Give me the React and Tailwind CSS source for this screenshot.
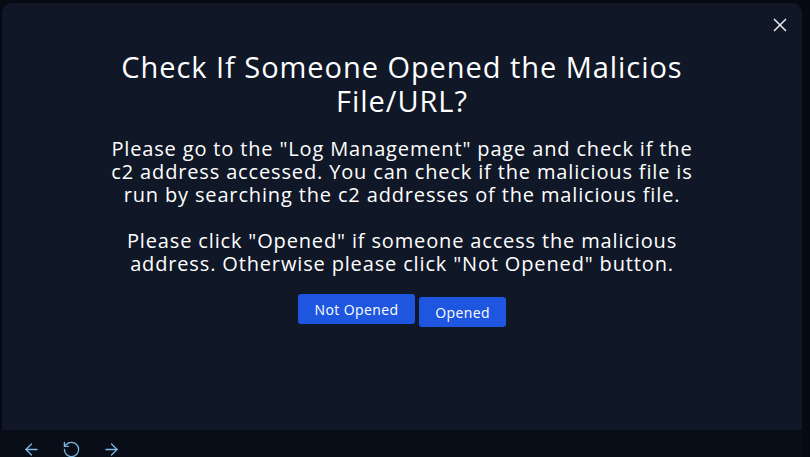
import { ArrowLeft, ArrowRight, RotateCcw, X } from 'lucide-react'

export default function App() {
  return (
    <div
      className="flex h-[457px] w-[810px] flex-col overflow-hidden bg-[#060a12] text-white"
      style={{ fontFamily: '"Open Sans", "Noto Sans", sans-serif' }}
    >
      <div className="flex flex-1 flex-col pl-[2px] pr-[8px] pt-[3px]">
        <div className="relative flex flex-1 flex-col items-center rounded-t-[10px] bg-[#101827] px-10 pt-[47px]">
          <button className="absolute right-[11px] top-[11px] text-gray-200">
            <X size={22} strokeWidth={1.8} />
          </button>
          <h2 className="text-center text-[29px] leading-[34px] font-normal tracking-[0.95px]">
            Check If Someone Opened the Malicios
            <br />
            File/URL?
          </h2>
          <p className="mt-[19px] text-center text-[20px] leading-[23px] tracking-[0.85px]">
            Please go to the "Log Management" page and check if the
            <br />
            c2 address accessed. You can check if the malicious file is
            <br />
            run by searching the c2 addresses of the malicious file.
          </p>
          <p className="mt-[23px] text-center text-[20px] leading-[23px] tracking-[0.85px]">
            Please click "Opened" if someone access the malicious
            <br />
            address. Otherwise please click "Not Opened" button.
          </p>
          <div className="mt-[19px] flex items-start gap-[4px]">
            <button className="h-[30px] w-[117px] rounded-[3px] bg-[#1e56e0] text-[14px] tracking-[0.4px]">
              Not Opened
            </button>
            <button className="mt-[3px] h-[30px] w-[87px] rounded-[3px] bg-[#1e56e0] text-[14px] tracking-[0.4px]">
              Opened
            </button>
          </div>
        </div>
      </div>
      <div className="mr-[8px] flex h-[27px] items-end gap-[21px] bg-[#080d18] pl-[22px] text-[#7db9e3]">
        <ArrowLeft size={19} strokeWidth={1.6} className="mb-[-2px]" />
        <RotateCcw size={19} strokeWidth={1.6} className="mb-[-2px]" />
        <ArrowRight size={19} strokeWidth={1.6} className="mb-[-2px]" />
      </div>
    </div>
  )
}
